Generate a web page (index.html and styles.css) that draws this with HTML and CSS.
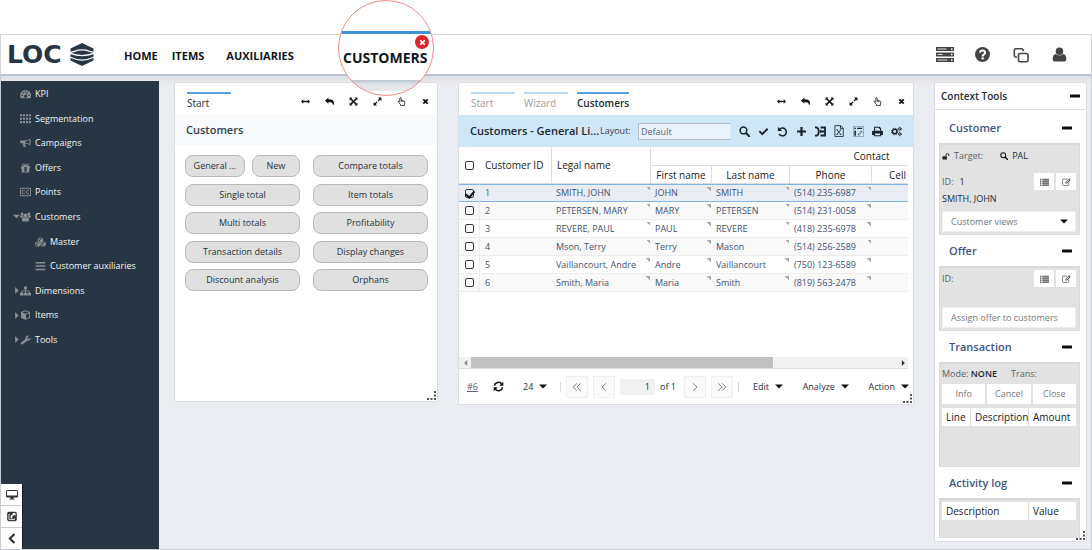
FILE: index.html
```html
<!DOCTYPE html>
<html lang="en">
<head>
<meta charset="utf-8">
<title>LOC - Customers</title>
<link rel="stylesheet" href="styles.css">
</head>
<body>
<svg class="sprite" aria-hidden="true">
  <symbol id="arrows-h" viewBox="0 0 16 16"><path d="M0 8l4-4v2.700h8V4l4 4-4 4V9.300H4V12z"/></symbol>
  <symbol id="reply" viewBox="0 0 16 16"><path d="M0 6.500L6 1v3.200c6.500 0 10 2 10 6.300 0 2-.8 3.500-2 4.500.6-4-2-6-8-6V12z"/></symbol>
  <symbol id="arrows-alt" viewBox="0 0 16 16"><path d="M1 1h5L4.500 2.500 8 6l3.500-3.500L10 1h5v5l-1.500-1.500L10 8l3.500 3.500L15 10v5h-5l1.500-1.500L8 10l-3.500 3.500L6 15H1v-5l1.500 1.500L6 8 2.500 4.500 1 6z"/></symbol>
  <symbol id="expand" viewBox="0 0 16 16"><path d="M9 1h6v6l-2.200-2.200L9.500 8.100 7.900 6.500l3.300-3.300zM7 15H1V9l2.200 2.200 3.300-3.300 1.600 1.600-3.300 3.300z"/></symbol>
  <symbol id="hand" viewBox="0 0 16 16"><path d="M5 9V2.200a1.200 1.200 0 0 1 2.400 0V6l5.200 1.200c1 .3 1.400 1 1.300 2l-.7 3.300V15H6v-2L2.300 9.200c-.8-1 .6-2.200 1.500-1.400L5 9M8 6v2M10.500 6.700v2" fill="none" stroke="currentColor" stroke-width="1.400"/></symbol>
  <symbol id="times" viewBox="0 0 16 16"><path d="M4.300 1.500L8 5.200l3.700-3.700 2.800 2.800L10.800 8l3.700 3.700-2.800 2.800L8 10.800l-3.700 3.700-2.800-2.800L5.200 8 1.500 4.300z"/></symbol>
  <symbol id="search" viewBox="0 0 16 16"><path d="M10.500 10.500L15 15" fill="none" stroke="currentColor" stroke-width="2.800" stroke-linecap="round"/><circle cx="6.500" cy="6.500" r="4.900" fill="none" stroke="currentColor" stroke-width="2.200"/></symbol>
  <symbol id="check" viewBox="0 0 16 16"><path d="M1 8.500l2-2 3.200 3.200L13 3l2 2-8.800 8.800z"/></symbol>
  <symbol id="undo" viewBox="0 0 16 16"><path d="M3.500 5A5.700 5.700 0 1 1 3 11.500" fill="none" stroke="currentColor" stroke-width="2.200"/><path d="M1.300 1v6.200h6.200z"/></symbol>
  <symbol id="plus" viewBox="0 0 16 16"><path d="M6.400 1.500h3.200v4.900h4.900v3.200H9.600v4.900H6.400V9.600H1.500V6.400h4.900z"/></symbol>
  <symbol id="merge" viewBox="0 0 16 16"><path d="M0 2h2.500C6.500 4 6.500 12 2.500 14H0M8 2.200h6.600v11.600H8M9 8h5.500" fill="none" stroke="currentColor" stroke-width="2.600"/><path d="M7 5l4 3-4 3z"/></symbol>
  <symbol id="excel" viewBox="0 0 16 16"><path d="M2.500.8h7.700l3.500 3.500v11H2.500zM10 1v3.600h3.500M5.300 6.500l5 6M10.300 6.500l-5 6M4.500 12.500h2M9 12.500h2M4.500 6.500h2M9 6.500h2" fill="none" stroke="currentColor" stroke-width="1.100"/></symbol>
  <symbol id="pivot" viewBox="0 0 16 16"><path d="M.5.500h15v15H.5z" fill="none" stroke="currentColor" stroke-width=".5"/><path d="M2 2.500h2.200v2H2zM6 2.500h7.500v2H6zM2 6.500h2.200V14H2z"/><path d="M12 7.500c0 3-1.500 4.700-4.500 4.700m1.500-1.700l-1.700 1.700L9 14M10.300 9L12 7.200 13.700 9" fill="none" stroke="currentColor" stroke-width=".8"/></symbol>
  <symbol id="print" viewBox="0 0 16 16"><path fill-rule="evenodd" d="M3 7V1h8l2.300 2.300V7H14a2 2 0 0 1 2 2v4h-2.700v2H2.700v-2H0V9a2 2 0 0 1 2-2zM4.500 2.500V7h7.300V4H10V2.500zM4.300 10.800v2.700h7.400v-2.700z"/></symbol>
  <symbol id="cogs" viewBox="0 0 18 16"><circle cx="6" cy="8" r="3.600" fill="none" stroke="currentColor" stroke-width="2.400"/><circle cx="6" cy="8" r="5.300" fill="none" stroke="currentColor" stroke-width="1.600" stroke-dasharray="2.200 1.960"/><circle cx="14.300" cy="3.700" r="1.900" fill="none" stroke="currentColor" stroke-width="1.600"/><circle cx="14.300" cy="12.300" r="1.900" fill="none" stroke="currentColor" stroke-width="1.600"/><path d="M14.300.3v1.500M14.300 5.500V7M11 3.700h1.500M16 3.700h2M14.300 9v1.500M14.300 14v1.700M11 12.300h1.500M16 12.300h2" stroke="currentColor" stroke-width="1.400"/></symbol>
  <symbol id="refresh" viewBox="0 0 16 16"><path d="M2 6.700A6 6 0 0 1 12.500 4M14 9.300A6 6 0 0 1 3.500 12" fill="none" stroke="currentColor" stroke-width="2.300"/><path d="M15 1v6H9zM1 15V9h6z"/></symbol>
  <symbol id="caret" viewBox="0 0 10 6"><path d="M0 .5h10L5 5.500z"/></symbol>
  <symbol id="chev-l" viewBox="0 0 16 16"><path d="M11 2L5 8l6 6" fill="none" stroke="currentColor" stroke-width="1.500"/></symbol>
  <symbol id="chev-r" viewBox="0 0 16 16"><path d="M5 2l6 6-6 6" fill="none" stroke="currentColor" stroke-width="1.500"/></symbol>
  <symbol id="chev-ll" viewBox="0 0 16 16"><path d="M8 2L2 8l6 6M14 2L8 8l6 6" fill="none" stroke="currentColor" stroke-width="1.500"/></symbol>
  <symbol id="chev-rr" viewBox="0 0 16 16"><path d="M2 2l6 6-6 6M8 2l6 6-6 6" fill="none" stroke="currentColor" stroke-width="1.500"/></symbol>
  <symbol id="minus" viewBox="0 0 10 4"><rect width="10" height="3" y=".5" rx=".5"/></symbol>
  <symbol id="list" viewBox="0 0 16 14"><path d="M0 1h2.500v2H0zM4 1h12v2H4zM0 4.500h2.500v2H0zM4 4.500h12v2H4zM0 8h2.500v2H0zM4 8h12v2H4zM0 11.500h2.500v2H0zM4 11.500h12v2H4z"/></symbol>
  <symbol id="edit" viewBox="0 0 16 14"><path d="M12 8v3.500a1.700 1.700 0 0 1-1.700 1.700H2.700A1.700 1.700 0 0 1 1 11.500v-8a1.700 1.700 0 0 1 1.700-1.700H9" fill="none" stroke="currentColor" stroke-width="1.200"/><path fill-rule="evenodd" d="M6 7l6.500-6.500L15.300 3.300 9 9.800H6zM7 7.500v1h1l5-5-1-1z"/></symbol>
  <symbol id="unlock" viewBox="0 0 18 16"><path d="M1 7.500h10V15H1z"/><path d="M9 8V4.500a3.300 3.300 0 0 1 6.600 0V7" fill="none" stroke="currentColor" stroke-width="2"/></symbol>
  <symbol id="servers" viewBox="0 0 18 15"><path d="M0 0h18v4H0zM0 5.500h18v4H0zM0 11h18v4H0z"/><path d="M1.500 2h9M1.500 7.500h5M1.500 13h10" stroke="#ddd" stroke-width="1.200"/><path d="M15 2h1.500M15 7.500h1.500M15 13h1.500" stroke="#fff" stroke-width="1.500"/></symbol>
  <symbol id="help" viewBox="0 0 16 16"><circle cx="8" cy="8" r="8"/><path d="M5.300 6.200C5.400 3 10.800 3 10.800 6c0 1.900-2.600 1.900-2.600 4" fill="none" stroke="#fff" stroke-width="2.100"/><path d="M7 11h2.400v2.200H7z" fill="#fff"/></symbol>
  <symbol id="clone" viewBox="0 0 16 16"><path d="M4 10H2.800A1.500 1.500 0 0 1 1.300 8.500V3.300a1.500 1.500 0 0 1 1.500-1.500h5.900a1.500 1.500 0 0 1 1.500 1.500v1" fill="none" stroke="currentColor" stroke-width="1.600"/><rect x="5.500" y="6.500" width="9.500" height="8.200" rx="1.500" fill="none" stroke="currentColor" stroke-width="1.600"/></symbol>
  <symbol id="user" viewBox="0 0 16 16"><circle cx="8" cy="4.500" r="4"/><path d="M4 7.500c2.500 2 5.500 2 8 0 2.300.5 3.300 2.600 3.300 5.200 0 1.600-1 2.800-2.600 2.800H3.300C1.700 15.500.7 14.300.7 12.700.7 10.100 1.700 8 4 7.500z"/></symbol>
  <symbol id="gauge" viewBox="0 0 16 14"><path fill-rule="evenodd" d="M8 1a8 8 0 0 1 8 8c0 1.600-.4 3-1.200 4H1.200A8 8 0 0 1 8 1zM2 8v2h2V8zM4 4v2h2V4zM7 2.500v2h2v-2zM12 8v2h2V8zM10.500 4L8.300 8.500a2 2 0 1 0 1 .4l2.200-4.500z"/></symbol>
  <symbol id="grid" viewBox="0 0 16 14"><path d="M0 0h3v3H0zM4.300 0h3v3h-3zM8.700 0h3v3h-3zM13 0h3v3h-3zM0 5h3v3H0zM4.300 5h3v3h-3zM8.700 5h3v3h-3zM13 5h3v3h-3zM0 10h3v3H0zM4.300 10h3v3h-3zM8.700 10h3v3h-3zM13 10h3v3h-3z"/></symbol>
  <symbol id="horn" viewBox="0 0 16 14"><path fill-rule="evenodd" d="M15 0v4c1 .3 1 2 0 2.300V11c-2-2-4.500-3-7.500-3.200-.7 1 .3 1.500-.2 2.500.5.800 1 1 1.500 1.700-1 1.400-3 1-3.600.2C4.700 10.500 4 9 4.500 7.500H1.300a1 1 0 0 1-1-1V4.300a1 1 0 0 1 1-1h5.200C10 3.300 13 2 15 0zM8 4.500v2c2.200.2 4.200 1 5.800 2V2.400C12 3.500 10 4.300 8 4.500z"/></symbol>
  <symbol id="gift" viewBox="0 0 16 14"><path fill-rule="evenodd" d="M1.500 4.500h4C2 4 2.800.3 5.300.3 6.700.3 7.500 1.500 8 2.500 8.500 1.500 9.300.3 10.700.3c2.500 0 3.300 3.700-.2 4.200h4V8h-1v5.500h-11V8h-1zM6.500 5.500v6.800h3V5.500zM5.300 1.700c-1.200 0-1.200 1.600 0 1.600h1.500c-.4-.8-.8-1.600-1.500-1.600zm5.400 0c-.7 0-1.100.8-1.500 1.600h1.500c1.200 0 1.200-1.600 0-1.600z"/></symbol>
  <symbol id="cc" viewBox="0 0 16 14"><path d="M.6 1.600h14.800v10.800H.6zM7 5.300C6 3.800 3 4.300 3 7s3 3.200 4 1.700M13 5.300C12 3.800 9 4.300 9 7s3 3.200 4 1.700" fill="none" stroke="currentColor" stroke-width="1.400"/></symbol>
  <symbol id="users" viewBox="0 0 16 14"><circle cx="8" cy="4.500" r="2.700"/><circle cx="3" cy="2.500" r="1.900"/><circle cx="13" cy="2.500" r="1.900"/><path d="M5.500 7c1.500 1.400 3.500 1.400 5 0 2 .2 2.500 2.500 2.500 4.500 0 1.500-.8 2.200-2 2.200H5c-1.200 0-2-.7-2-2.200 0-2 .5-4.300 2.500-4.500zM1.500 4.300c1 .8 2.300.8 3.200.2 0 1 .2 1.600.6 2.200C4 6.700 3.200 7 2.600 8H1.500C.5 8 0 7.500 0 6.800c0-1 .3-2.500 1.500-2.500zM14.500 4.300c-1 .8-2.300.8-3.200.2 0 1-.2 1.600-.6 2.200 1.300 0 2.100.3 2.700 1.300h1.100c1 0 1.500-.5 1.500-1.200 0-1-.3-2.500-1.500-2.500z"/></symbol>
  <symbol id="cubes" viewBox="0 0 16 14"><path d="M8 .7l3.300 1.500v3.500L8 7.200 4.700 5.700V2.200zM4.200 6.700l3.300 1.500v3.700l-3.300 1.500-3.500-1.500V8.200zM11.800 6.700l3.500 1.500v3.700l-3.500 1.500-3.300-1.500V8.200zM4.700 2.300L8 3.800l3.300-1.500M8 3.800v3M.8 8.300l3.400 1.500 3.300-1.500M4.200 9.800v3.300M8.500 8.300l3.300 1.500 3.400-1.500M11.800 9.800v3.300" fill="none" stroke="currentColor" stroke-width="1.200"/><path d="M8 4l3.300-1.500v3L8 7zM4.200 10l3.300-1.500v3.200L4.200 13zM11.800 10l3.500-1.500v3.200l-3.500 1.500z"/></symbol>
  <symbol id="bars" viewBox="0 0 16 14"><path d="M1 1h14v2.200H1zM1 6h14v2.200H1zM1 11h14v2.200H1z"/></symbol>
  <symbol id="sitemap" viewBox="0 0 16 14"><path d="M5.800.5h4.400v4H8.600v1.700h5.200v3.300H16v4h-5V9.500h1.600V7.400h-4v2.100h1.800v4H5.600v-4h1.800V7.400h-4v2.100H5v4H0v-4h2.200V6.200h5.200V4.500H5.800z"/></symbol>
  <symbol id="cube" viewBox="0 0 16 14"><path fill-rule="evenodd" d="M8 0l6.500 2.500v8.700L8 14l-6.500-2.800V2.500zM8 1.500L3.300 3.300 8 5.100l4.700-1.800zM8.700 6.300v6l4.500-1.900V4.600z"/></symbol>
  <symbol id="wrench" viewBox="0 0 16 14"><path d="M1.500 10.500L8 5.500C7.500 2.500 10 0 13.500.7L11 2.700v2l2 .8 2.700-1.700c.3 3-2.300 5-5.300 4.200L4 13.200c-2 1.300-4-1-2.500-2.700z"/></symbol>
  <symbol id="monitor" viewBox="0 0 16 14"><path fill-rule="evenodd" d="M1.500 1h13A1.500 1.500 0 0 1 16 2.500v7a1.500 1.500 0 0 1-1.500 1.500H10v1.500h1.500v1h-7v-1H6V11H1.500A1.500 1.500 0 0 1 0 9.500v-7A1.500 1.500 0 0 1 1.500 1zM1.200 2.300v6h13.600v-6z"/></symbol>
  <symbol id="share" viewBox="0 0 16 16"><rect x="1" y="1" width="14" height="14" rx="2.500"/><path d="M8.500 3H13v4.500l-1.600-1.600C8 7 7.500 9 9 11.500 4.500 10.500 5 6.500 9.800 4.400z" fill="#fff"/><path d="M5 5H3.500v7.500h8V10.500" fill="none" stroke="#fff" stroke-width="1.200"/></symbol>
  <symbol id="angle" viewBox="0 0 16 16"><path d="M11.500 1.500L5 8l6.500 6.500" fill="none" stroke="currentColor" stroke-width="3.200"/></symbol>
  <symbol id="tri-r" viewBox="0 0 6 10"><path d="M1 0v10l5-5z"/></symbol>
  <symbol id="tri-l" viewBox="0 0 6 10"><path d="M5 0v10L0 5z"/></symbol>
  <symbol id="grip" viewBox="0 0 9 9"><path d="M7 0h2v2H7zM7 3.500h2v2H7zM7 7h2v2H7zM3.500 7h2v2h-2zM0 7h2v2H0z"/></symbol>
</svg>

<div class="app">
  <header class="topbar">
    <a class="logo" href="#" aria-label="LOC home"><span>LOC</span>
      <svg class="logo-mark" viewBox="0 0 24 24" aria-hidden="true"><path d="M12 0l12 5.800v12.400L12 24 0 18.200V5.800z"/><path d="M-1 10l5-1.200q8-3 16 0L25 10M-1 10.500q13 5.500 26 0M-1 14.500q13 6.500 26 0" fill="none" stroke="#fff" stroke-width="1.300"/></svg>
    </a>
    <nav class="mainnav"><a href="#">HOME</a><a href="#">ITEMS</a><a class="aux" href="#">AUXILIARIES</a></nav>
    <div class="top-actions">
      <button class="plain servers" aria-label="Servers"><svg class="i18"><use href="#servers"/></svg></button>
      <button class="plain" aria-label="Help"><svg class="i14"><use href="#help"/></svg></button>
      <button class="plain" aria-label="Windows"><svg class="i16"><use href="#clone"/></svg></button>
      <button class="plain" aria-label="Account"><svg class="i14"><use href="#user"/></svg></button>
    </div>
  </header>

  <div class="body">
    <aside class="sidebar">
      <ul class="menu">
        <li><a href="#"><svg class="mi"><use href="#gauge"/></svg>KPI</a></li>
        <li><a href="#"><svg class="mi"><use href="#grid"/></svg>Segmentation</a></li>
        <li><a href="#"><svg class="mi"><use href="#horn"/></svg>Campaigns</a></li>
        <li><a href="#"><svg class="mi"><use href="#gift"/></svg>Offers</a></li>
        <li><a href="#"><svg class="mi"><use href="#cc"/></svg>Points</a></li>
        <li class="tree"><a href="#"><svg class="twist down"><use href="#caret"/></svg><svg class="mi"><use href="#users"/></svg>Customers</a></li>
        <li class="sub"><a href="#"><svg class="mi"><use href="#cubes"/></svg>Master</a></li>
        <li class="sub"><a href="#"><svg class="mi"><use href="#bars"/></svg>Customer auxiliaries</a></li>
        <li class="tree"><a href="#"><svg class="twist"><use href="#tri-r"/></svg><svg class="mi"><use href="#sitemap"/></svg>Dimensions</a></li>
        <li class="tree"><a href="#"><svg class="twist"><use href="#tri-r"/></svg><svg class="mi"><use href="#cube"/></svg>Items</a></li>
        <li class="tree"><a href="#"><svg class="twist"><use href="#tri-r"/></svg><svg class="mi"><use href="#wrench"/></svg>Tools</a></li>
      </ul>
      <div class="dock">
        <button aria-label="Display"><svg><use href="#monitor"/></svg></button>
        <button aria-label="Share"><svg><use href="#share"/></svg></button>
        <button aria-label="Collapse menu"><svg><use href="#angle"/></svg></button>
      </div>
    </aside>

    <main class="workspace">
      <section class="panel start">
        <div class="panel-head">
          <div class="tabs"><button class="tab active soft">Start</button></div>
          <div class="win">
            <button class="plain" aria-label="Widen"><svg><use href="#arrows-h"/></svg></button>
            <button class="plain" aria-label="Back"><svg><use href="#reply"/></svg></button>
            <button class="plain" aria-label="Full size"><svg><use href="#arrows-alt"/></svg></button>
            <button class="plain" aria-label="Expand"><svg><use href="#expand"/></svg></button>
            <button class="plain" aria-label="Select"><svg><use href="#hand"/></svg></button>
            <button class="plain" aria-label="Close"><svg class="x"><use href="#times"/></svg></button>
          </div>
        </div>
        <h2 class="panel-title">Customers</h2>
        <div class="choices">
          <div class="pair"><button>General ...</button><button>New</button></div>
          <button>Compare totals</button>
          <button>Single total</button><button>Item totals</button>
          <button>Multi totals</button><button>Profitability</button>
          <button>Transaction details</button><button>Display changes</button>
          <button>Discount analysis</button><button>Orphans</button>
        </div>
        <svg class="grip"><use href="#grip"/></svg>
      </section>

      <section class="panel list">
        <div class="panel-head">
          <div class="tabs"><button class="tab">Start</button><button class="tab">Wizard</button><button class="tab active">Customers</button></div>
          <div class="win">
            <button class="plain" aria-label="Widen"><svg><use href="#arrows-h"/></svg></button>
            <button class="plain" aria-label="Back"><svg><use href="#reply"/></svg></button>
            <button class="plain" aria-label="Full size"><svg><use href="#arrows-alt"/></svg></button>
            <button class="plain" aria-label="Expand"><svg><use href="#expand"/></svg></button>
            <button class="plain" aria-label="Select"><svg><use href="#hand"/></svg></button>
            <button class="plain" aria-label="Close"><svg class="x"><use href="#times"/></svg></button>
          </div>
        </div>
        <div class="toolbar">
          <h2>Customers - General Li...</h2>
          <label for="layout">Layout:</label>
          <input id="layout" type="text" value="Default">
          <div class="tools">
            <button class="plain" aria-label="Search"><svg><use href="#search"/></svg></button>
            <button class="plain" aria-label="Apply"><svg><use href="#check"/></svg></button>
            <button class="plain" aria-label="Undo"><svg><use href="#undo"/></svg></button>
            <button class="plain" aria-label="Add"><svg><use href="#plus"/></svg></button>
            <button class="plain" aria-label="Merge"><svg><use href="#merge"/></svg></button>
            <button class="plain" aria-label="Export to Excel"><svg class="big"><use href="#excel"/></svg></button>
            <button class="plain" aria-label="Pivot"><svg><use href="#pivot"/></svg></button>
            <button class="plain" aria-label="Print"><svg><use href="#print"/></svg></button>
            <button class="plain" aria-label="Settings"><svg><use href="#cogs"/></svg></button>
          </div>
        </div>
        <div class="grid-view">
          <table class="data">
            <colgroup><col class="c-check"><col class="c-id"><col class="c-legal"><col class="c-first"><col class="c-last"><col class="c-phone"><col class="c-cell"></colgroup>
            <thead>
              <tr><th rowspan="2" class="chk"><input type="checkbox" aria-label="Select all"></th><th rowspan="2" class="left">Customer ID</th><th rowspan="2" class="left line">Legal name</th><th colspan="4" class="line under">Contact</th></tr>
              <tr><th class="line">First name</th><th class="line">Last name</th><th class="line">Phone</th><th class="line cell">Cell</th></tr>
            </thead>
            <tbody>
              <tr class="selected"><td class="chk"><input type="checkbox" checked aria-label="Select 1"></td><td>1</td><td class="mark">SMITH, JOHN</td><td class="mark">JOHN</td><td class="mark">SMITH</td><td class="mark">(514) 235-6987</td><td></td></tr>
              <tr><td class="chk"><input type="checkbox" aria-label="Select 2"></td><td>2</td><td class="mark">PETERSEN, MARY</td><td class="mark">MARY</td><td class="mark">PETERSEN</td><td class="mark">(514) 231-0058</td><td></td></tr>
              <tr><td class="chk"><input type="checkbox" aria-label="Select 3"></td><td>3</td><td class="mark">REVERE, PAUL</td><td class="mark">PAUL</td><td class="mark">REVERE</td><td class="mark">(418) 235-6978</td><td></td></tr>
              <tr><td class="chk"><input type="checkbox" aria-label="Select 4"></td><td>4</td><td class="mark">Mson, Terry</td><td class="mark">Terry</td><td class="mark">Mason</td><td class="mark">(514) 256-2589</td><td></td></tr>
              <tr><td class="chk"><input type="checkbox" aria-label="Select 5"></td><td>5</td><td class="mark">Vaillancourt, Andre</td><td class="mark">Andre</td><td class="mark">Vaillancourt</td><td class="mark">(750) 123-6589</td><td></td></tr>
              <tr><td class="chk"><input type="checkbox" aria-label="Select 6"></td><td>6</td><td class="mark">Smith, Maria</td><td class="mark">Maria</td><td class="mark">Smith</td><td class="mark">(819) 563-2478</td><td></td></tr>
            </tbody>
          </table>
        </div>
        <div class="scroll"><svg class="dim"><use href="#tri-l"/></svg><div class="track"><div class="thumb"></div></div><svg><use href="#tri-r"/></svg></div>
        <div class="pager">
          <a href="#" class="count">#6</a>
          <button class="plain refresh" aria-label="Refresh"><svg><use href="#refresh"/></svg></button>
          <span class="size"><select aria-label="Rows per page"><option>24</option></select><svg class="caret"><use href="#caret"/></svg></span>
          <span class="sep"></span>
          <button class="step" aria-label="First page"><svg><use href="#chev-ll"/></svg></button>
          <button class="step" aria-label="Previous page"><svg><use href="#chev-l"/></svg></button>
          <input class="page" type="text" value="1" aria-label="Page">
          <span class="of">of 1</span>
          <button class="step" aria-label="Next page"><svg><use href="#chev-r"/></svg></button>
          <button class="step" aria-label="Last page"><svg><use href="#chev-rr"/></svg></button>
          <span class="sep"></span>
          <div class="menus">
            <button class="plain">Edit<svg class="caret"><use href="#caret"/></svg></button>
            <button class="plain">Analyze<svg class="caret"><use href="#caret"/></svg></button>
            <button class="plain">Action<svg class="caret"><use href="#caret"/></svg></button>
          </div>
        </div>
        <svg class="grip"><use href="#grip"/></svg>
      </section>

      <aside class="panel context">
        <div class="ctx-head"><h2>Context Tools</h2><button class="plain" aria-label="Collapse tools"><svg class="minus"><use href="#minus"/></svg></button></div>
        <div class="ctx-sec first"><h3>Customer</h3><button class="plain" aria-label="Collapse customer"><svg class="minus"><use href="#minus"/></svg></button></div>
        <div class="box customer">
          <div class="target"><svg class="lock"><use href="#unlock"/></svg><span>Target:</span><svg class="find"><use href="#search"/></svg><span class="dark">PAL</span></div>
          <div class="idrow"><span>ID:</span><span class="dark value">1</span><button aria-label="List customers"><svg><use href="#list"/></svg></button><button aria-label="Edit customer"><svg><use href="#edit"/></svg></button></div>
          <div class="dark name">SMITH, JOHN</div>
          <span class="views"><select aria-label="Customer views"><option>Customer views</option></select><svg class="caret"><use href="#caret"/></svg></span>
        </div>
        <div class="ctx-sec"><h3>Offer</h3><button class="plain" aria-label="Collapse offer"><svg class="minus"><use href="#minus"/></svg></button></div>
        <div class="box offer">
          <div class="idrow"><span>ID:</span><span class="value"></span><button aria-label="List offers"><svg><use href="#list"/></svg></button><button aria-label="Edit offer"><svg><use href="#edit"/></svg></button></div>
          <button class="assign">Assign offer to customers</button>
        </div>
        <div class="ctx-sec"><h3>Transaction</h3><button class="plain" aria-label="Collapse transaction"><svg class="minus"><use href="#minus"/></svg></button></div>
        <div class="box trans">
          <div class="mode"><span>Mode: <b>NONE</b></span><span>Trans:</span></div>
          <div class="three"><button>Info</button><button>Cancel</button><button>Close</button></div>
          <table class="mini"><colgroup><col class="m1"><col class="m2"><col class="m3"></colgroup><tr><th>Line</th><th>Description</th><th>Amount</th></tr></table>
        </div>
        <div class="ctx-sec"><h3>Activity log</h3><button class="plain" aria-label="Collapse log"><svg class="minus"><use href="#minus"/></svg></button></div>
        <div class="box log">
          <table class="mini"><colgroup><col><col class="m3"></colgroup><tr><th>Description</th><th>Value</th></tr></table>
        </div>
        <svg class="grip"><use href="#grip"/></svg>
      </aside>
    </main>
  </div>

  <div class="lens">
    <div class="lens-edge"></div>
    <a href="#">CUSTOMERS</a>
    <button class="lens-close" aria-label="Close customers"><svg><use href="#times"/></svg></button>
  </div>
</div>
</body>
</html>
```
FILE: styles.css
```css
* { box-sizing: border-box; }
body { margin: 0; background: #fff; font: 500 9px/14px "Open Sans", "Noto Sans", sans-serif; color: #3b4650; }
button, input, select { font: inherit; color: inherit; margin: 0; padding: 0; border: 0; border-radius: 0; background: none; }
button { display: flex; align-items: center; justify-content: center; white-space: nowrap; }
h2, h3, ul { margin: 0; padding: 0; }
a { color: inherit; text-decoration: none; }
svg { display: block; flex: none; fill: currentColor; }
select { appearance: none; }
table { border-collapse: separate; border-spacing: 0; table-layout: fixed; width: 100%; }
.sprite { position: absolute; width: 0; height: 0; }
.plain { color: #111; }

.app { position: relative; min-height: 100vh; padding-top: 34px; display: flex; flex-direction: column; }
.topbar { display: flex; align-items: center; height: 42px; padding: 0 24px 0 6px; border: 1px solid #d4d4d4; border-bottom: 2px solid #b9c2d3; background: #fff; }
.logo { display: flex; align-items: center; gap: 8px; width: 117px; color: #283643; }
.logo span { font: bold 25px/28px "DejaVu Sans", sans-serif; }
.logo-mark { width: 24px; height: 23px; }
.mainnav { display: flex; flex: 1; gap: 14px; padding-top: 2px; color: #10161c; font-size: 11px; font-weight: 700; }
.mainnav .aux { margin-left: 8px; }
.top-actions { display: flex; gap: 23px; align-items: center; }
.top-actions .plain { color: #444; }
.servers { width: 15px; }
.i18 { width: 18px; height: 15px; }
.i14 { width: 15px; height: 15px; }
.i16 { width: 16px; height: 16px; }

.body { flex: 1; display: flex; border: solid #c9ccd0; border-width: 0 1px 1px; background: linear-gradient(#dcdfe5, #e9e9ea 6px, #e9edf2 12px); }
.sidebar { width: 158px; margin-top: 5px; flex: none; display: flex; flex-direction: column; justify-content: space-between; background: #283643; color: #f1f3f5; }
.menu { list-style: none; display: grid; grid-auto-rows: 1fr; min-height: 271px; padding-top: 1px; }
.menu li { display: flex; padding-left: 19px; }
.menu li.sub { padding-left: 34px; }
.menu li.tree { padding-left: 12px; }
.menu a { display: flex; align-items: center; gap: 4px; }
.menu .tree a { gap: 0; }
.menu .tree .mi { margin-right: 4px; }
.mi { width: 11px; height: 10px; color: #8b8f92; }
.twist { width: 7px; height: 7px; color: #8b8f92; }
.dock { width: 22px; display: grid; grid-auto-rows: 21px; gap: 1px; background: #ccc; border-right: 1px solid #111d29; }
.dock button { background: #fff; color: #333; }
.dock svg { width: 12px; height: 11px; }

.workspace { flex: 1; min-width: 0; display: grid; grid-template-columns: 264px minmax(0, 1fr) 153px; column-gap: 20px; align-items: start; padding: 6px 4px 6px 15px; }
.panel { display: flex; flex-direction: column; background: #fff; border: 1px solid #dcdee2; position: relative; }
.start { min-height: 320px; }
.list { min-height: 323px; }
.grip { position: absolute; right: 1px; bottom: 1px; width: 9px; height: 9px; color: #555; }
.panel-head { display: flex; justify-content: space-between; height: 32px; padding: 9px 7px 0 12px; }
.tabs { display: flex; gap: 9px; font-size: 10px; }
.tab { align-self: flex-start; min-width: 44px; justify-content: flex-start; border-top: 2px solid #bddcf5; padding-top: 2px; color: #9b9b9b; font-weight: 500; }
.tab.active { border-color: #5a9fdc; color: #222d38; font-weight: 600; }
.tab.active.soft { font-weight: 500; }
.win { display: flex; gap: 14px; height: 18px; align-items: center; }
.win .plain { width: 10px; }
.win svg { width: 9px; height: 9px; }
.win .x { width: 7px; height: 7px; }
.panel-title { padding: 0 11px; font-size: 11px; line-height: 30px; font-weight: 600; color: #333e48; background: #f8f9fb; }
.choices { display: grid; grid-template-columns: 1fr 1fr; column-gap: 13px; align-content: space-between; height: 136px; margin: 10px 9px 0 10px; }
.choices button { height: 22px; flex: 1; border: 1px solid #b9b9b9; border-radius: 8px; background: #e0e0e0; color: #26313b; }
.pair { display: flex; gap: 7px; }
.pair button:first-child { flex: 5; }
.pair button:last-child { flex: 4; }

.toolbar { display: flex; align-items: center; height: 32px; padding: 0 11px; background: #cfe6f7; color: #35424d; }
.toolbar h2 { width: 130px; font-size: 11px; font-weight: 600; color: #1c2731; white-space: nowrap; }
.toolbar label { width: 38px; }
.toolbar input { flex: 1; min-width: 60px; height: 17px; border: 1px solid #b5bcc2; border-right-color: #dfe9f1; background: #eaf3fb; padding: 0 2px; color: #59646e; }
.tools { display: flex; gap: 7px; padding-left: 7px; }
.tools .plain { width: 12px; color: #18232c; }
.tools svg { width: 11px; height: 11px; }
.tools .big { width: 12px; height: 12px; }
.grid-view { flex: 1; overflow: hidden; margin-right: 5px; }
.data { width: 633px; }
.c-check { width: 21px; } .c-id { width: 71px; } .c-legal { width: 99px; } .c-first { width: 61px; } .c-last { width: 78px; } .c-phone { width: 82px; }
.data th { height: 19px; padding: 0; font-size: 10px; font-weight: 500; color: #222; }
.data thead tr:last-child th { height: 18px; }
.data thead tr:last-child th, .data th[rowspan] { border-bottom: 1px solid #ddd; }
.data .left { text-align: left; padding-left: 5px; }
.data .line { border-left: 1px solid #ddd; }
.data .under { border-bottom: 1px solid #ddd; }
.data .cell { text-align: left; padding-left: 17px; }
.data td { height: 18px; padding: 0 5px; border-bottom: 1px solid #ededed; color: #435272; white-space: nowrap; }
.data .chk { padding: 0 0 0 6px; text-align: left; }
.data td.chk { border-right: 1px solid #ededed; }
.data tbody tr:nth-child(even) { background: #f9f9f9; }
.data tbody tr.selected { background: #e9ecf2; }
.data .selected td { border-top: 1px solid #80b4e4; border-bottom: 1px solid #80b4e4; }
.mark { background: linear-gradient(45deg, transparent 50%, #aaa 50%) right 0 top 2px / 4px 4px no-repeat; }
.chk input { appearance: none; display: flex; justify-content: center; width: 9px; height: 9px; border: 1px solid #333c44; border-radius: 2px; }
.chk input:checked::before { content: ""; width: 4px; height: 7px; margin-top: -1px; border: solid #111; border-width: 0 2px 2px 0; transform: rotate(40deg); }
.scroll { display: flex; align-items: center; height: 12px; margin-right: 5px; padding: 0 3px 0 5px; background: #f1f1f1; border-bottom: 1px solid #ddd; color: #333; }
.scroll svg { width: 4px; height: 6px; }
.scroll .dim { color: #888; }
.track { flex: 1; height: 11px; padding: 0 4px 0 3px; }
.thumb { width: 71%; height: 11px; background: #c1c1c1; }
.pager { display: flex; align-items: center; height: 35px; padding: 0 4px 0 8px; gap: 5px; color: #26313b; }
.count { width: 18px; text-decoration: underline; color: #59646e; }
.refresh { width: 16px; }
.refresh svg { width: 11px; height: 11px; }
.size { display: flex; align-items: center; margin-left: 12px; width: 32px; }
.size select { width: 16px; }
.caret { width: 8px; height: 5px; pointer-events: none; color: #111; }
.sep { width: 1px; height: 10px; background: #d8d8d8; }
.step { width: 22px; height: 22px; border: 1px solid #eee; background: #fafafa; color: #777; }
.step svg { width: 10px; height: 10px; }
.page { width: 35px; height: 16px; text-align: right; padding-right: 5px; background: #f1f1f1; }
.of { width: 19px; white-space: nowrap; }
.menus { flex: 1; display: flex; justify-content: space-between; padding-left: 9px; }
.menus .plain { gap: 6px; color: #26313b; }

.context { padding: 0 6px 3px 4px; color: #59646e; }
.ctx-head { display: flex; justify-content: space-between; align-items: center; height: 27px; margin: 0 -6px 0 -4px; padding: 0 6px; border-bottom: 1px solid #dcdee2; }
.ctx-head h2 { font-size: 10px; font-weight: 600; color: #222d38; }
.minus { width: 10px; height: 4px; }
.ctx-sec { display: flex; justify-content: space-between; align-items: center; height: 31px; padding: 0 8px 0 10px; }
.ctx-sec.first { height: 33px; padding-top: 3px; }
.ctx-sec h3 { font-size: 11px; font-weight: 600; color: #405689; }
.box { background: #e2e2e2; border: 1px solid #d9d9d9; border-width: 2px 1px 1px; padding: 0 3px 0 2px; }
.dark { color: #222d38; }
.customer { height: 92px; }
.target { display: flex; align-items: center; height: 22px; }
.lock { width: 8px; height: 7px; margin-right: 4px; color: #222; }
.find { width: 8px; height: 8px; margin: 0 4px 0 17px; color: #111; }
.idrow { display: flex; gap: 2px; align-items: center; margin-top: 6px; }
.idrow .value { flex: 1; padding-left: 4px; }
.idrow button { width: 20px; height: 17px; background: #fff; color: #444; }
.idrow svg { width: 9px; height: 8px; }
.name { line-height: 17px; }
.views { display: grid; align-items: center; margin-top: 4px; }
.views > * { grid-area: 1 / 1; }
.views select, .assign { width: 100%; height: 21px; padding-left: 8px; background: #fff; color: #777; border: 1px solid #eee; }
.views .caret { justify-self: end; margin-right: 8px; }
.offer { height: 65px; }
.offer .idrow { margin-top: 2px; }
.assign { justify-content: flex-start; margin-top: 20px; }
.trans { height: 105px; }
.mode { display: flex; gap: 14px; height: 20px; align-items: center; }
.mode b { font-weight: 600; color: #222d38; }
.three { display: grid; grid-template-columns: repeat(3, 1fr); gap: 2px; }
.three button { height: 20px; background: #fff; color: #777; }
.mini { margin-top: 4px; font-size: 10px; background: #fff; color: #222; }
.mini th { height: 18px; padding: 0 0 0 4px; text-align: left; font-weight: 500; }
.mini th + th { border-left: 1px solid #ddd; }
.mini .m1 { width: 28px; } .mini .m3 { width: 48px; }
.log { height: 40px; }
.log .mini { margin-top: 2px; }

.lens { position: absolute; left: 338px; top: 0; width: 96px; height: 96px; border: 1px solid #f58a8a; border-radius: 50%; overflow: hidden; background: linear-gradient(#fff 79px, #b9c2d3 79px, #dfe3e9 83px, #e9e9ea 90px, #fff 90px); }
.lens-edge { height: 3px; margin-top: 30px; background: #3d95d8; }
.lens a { display: block; margin-top: 14px; padding-left: 4px; font-size: 14px; line-height: 20px; font-weight: 700; color: #10161c; }
.lens-close { position: absolute; right: 4px; top: 34px; width: 14px; height: 14px; border-radius: 50%; background: #d9252b; color: #fff; }
.lens-close svg { width: 7px; height: 7px; }
```
